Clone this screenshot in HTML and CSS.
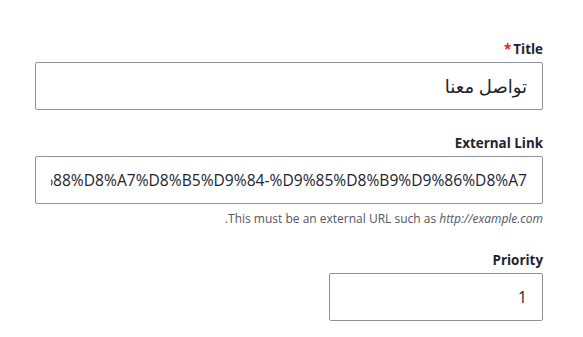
FILE: index.html
```html
<!DOCTYPE html>
<html lang="ar" dir="rtl">
<head>
<meta charset="utf-8">
<link rel="stylesheet" href="styles.css">
</head>
<body>
<form class="form">
  <div class="form-item">
    <label class="form-label" for="title">Title<span class="req">*</span></label>
    <input class="form-text arabic" id="title" type="text" value="تواصل معنا">
  </div>
  <div class="form-item">
    <label class="form-label" for="link">External Link</label>
    <input class="form-text" id="link" type="text" value="http://example.com/ar/%D8%AA%D9%88%D8%A7%D8%B5%D9%84-%D9%85%D8%B9%D9%86%D8%A7">
    <div class="description">This must be an external URL such as <em>http://example.com</em>.</div>
  </div>
  <div class="form-item">
    <label class="form-label" for="priority">Priority</label>
    <input class="form-text number" id="priority" type="text" value="1">
  </div>
</form>
</body>
</html>
```

FILE: styles.css
```css
html, body {
  margin: 0;
  padding: 0;
  background: #fff;
}
body {
  font-family: "Open Sans", "DejaVu Sans", sans-serif;
  color: #222330;
}
.form {
  padding: 40px 40px 0 35px;
  display: flex;
  flex-direction: column;
  gap: 24px;
}
.form-item {
  display: flex;
  flex-direction: column;
  align-items: flex-start;
}
.form-label {
  font-size: 13.4px;
  font-weight: 700;
  line-height: 18px;
  margin-bottom: 4px;
  color: #222330;
}
.req {
  color: #dc2323;
  margin-right: 2px;
  font-weight: 700;
}
.form-text {
  box-sizing: border-box;
  width: 100%;
  height: 48px;
  border: 1px solid #919297;
  border-radius: 2px;
  padding: 0 15px;
  font-family: "Open Sans", "DejaVu Sans", sans-serif;
  font-size: 15.6px;
  color: #222330;
  background: #fff;
  direction: rtl;
  text-align: right;
  outline: none;
}
.form-text.arabic {
  font-size: 18px;
}
.form-text.number {
  width: 214px;
}
.description {
  margin-top: 6px;
  font-size: 12px;
  line-height: 17px;
  color: #545560;
}
```
